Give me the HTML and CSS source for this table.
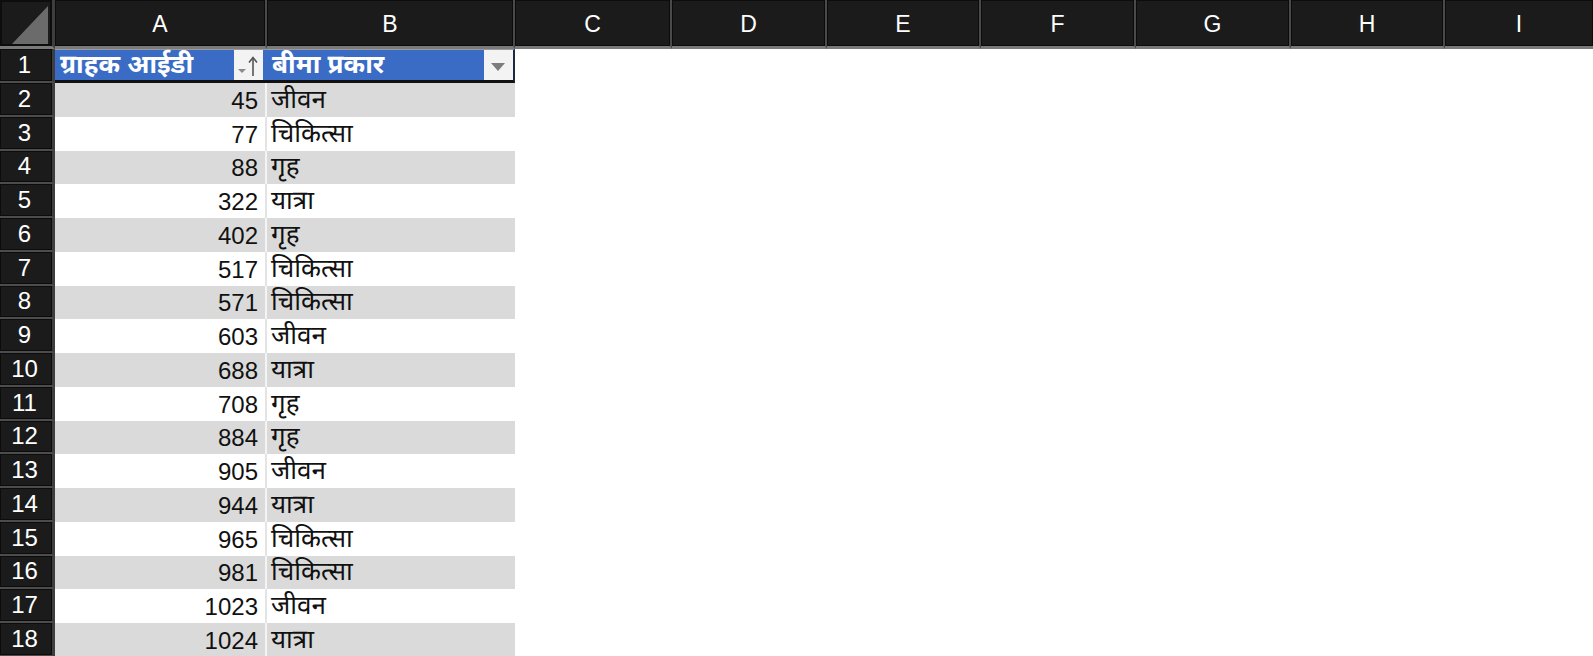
FILE: index.html
```html
<!DOCTYPE html>
<html lang="hi">
<head>
    <meta charset="UTF-8">
    <title>बीमा तालिका</title>
    <link rel="stylesheet" href="styles.css">
</head>
<body>
<div class="sheet">
    <!-- column headers -->
    <div class="corner"><svg width="52" height="48" viewBox="0 0 52 48"><polygon points="12,44 48,6 48,44" fill="#6b6b6b"/></svg></div>
    <div class="ch">A</div>
    <div class="ch">B</div>
    <div class="ch">C</div>
    <div class="ch">D</div>
    <div class="ch">E</div>
    <div class="ch">F</div>
    <div class="ch">G</div>
    <div class="ch">H</div>
    <div class="ch last">I</div>

    <!-- row 1: table header -->
    <div class="rh">1</div>
    <div class="th">
        <span>ग्राहक आईडी</span>
        <span class="filter">
            <svg width="28" height="30" viewBox="0 0 28 30">
                <polygon points="4,19 12,19 8,23" fill="#8a8a8a"/>
                <line x1="19" y1="8" x2="19" y2="26" stroke="#555" stroke-width="1.6"/>
                <polyline points="15,12.5 19,7.5 23,12.5" fill="none" stroke="#555" stroke-width="1.6"/>
            </svg>
        </span>
    </div>
    <div class="th th-b">
        <span>बीमा प्रकार</span>
        <span class="filter">
            <svg width="28" height="30" viewBox="0 0 28 30">
                <polygon points="7,13 21,13 14,21" fill="#7c7c7c"/>
            </svg>
        </span>
    </div>
    <div class="blank"></div>

    <div class="rh">2</div><div class="num band">45</div><div class="txt band">जीवन</div><div class="blank"></div>
    <div class="rh">3</div><div class="num">77</div><div class="txt">चिकित्सा</div><div class="blank"></div>
    <div class="rh">4</div><div class="num band">88</div><div class="txt band">गृह</div><div class="blank"></div>
    <div class="rh">5</div><div class="num">322</div><div class="txt">यात्रा</div><div class="blank"></div>
    <div class="rh">6</div><div class="num band">402</div><div class="txt band">गृह</div><div class="blank"></div>
    <div class="rh">7</div><div class="num">517</div><div class="txt">चिकित्सा</div><div class="blank"></div>
    <div class="rh">8</div><div class="num band">571</div><div class="txt band">चिकित्सा</div><div class="blank"></div>
    <div class="rh">9</div><div class="num">603</div><div class="txt">जीवन</div><div class="blank"></div>
    <div class="rh">10</div><div class="num band">688</div><div class="txt band">यात्रा</div><div class="blank"></div>
    <div class="rh">11</div><div class="num">708</div><div class="txt">गृह</div><div class="blank"></div>
    <div class="rh">12</div><div class="num band">884</div><div class="txt band">गृह</div><div class="blank"></div>
    <div class="rh">13</div><div class="num">905</div><div class="txt">जीवन</div><div class="blank"></div>
    <div class="rh">14</div><div class="num band">944</div><div class="txt band">यात्रा</div><div class="blank"></div>
    <div class="rh">15</div><div class="num">965</div><div class="txt">चिकित्सा</div><div class="blank"></div>
    <div class="rh">16</div><div class="num band">981</div><div class="txt band">चिकित्सा</div><div class="blank"></div>
    <div class="rh">17</div><div class="num">1023</div><div class="txt">जीवन</div><div class="blank"></div>
    <div class="rh">18</div><div class="num band">1024</div><div class="txt band">यात्रा</div><div class="blank"></div>
</div>
</body>
</html>
```

FILE: styles.css
```css
body {
    margin: 0;
    background: #fff;
    font-family: "Liberation Sans", "Noto Sans Devanagari", "Lohit Devanagari", "FreeSans", sans-serif;
    overflow: hidden;
}
.sheet {
    display: grid;
    grid-template-columns: 55px 212px 248px 157px 155px 154px 155px 155px 154px 1fr;
    grid-template-rows: 49px 34px repeat(17, 33.75px);
    width: 1593px;
}
.corner {
    background: #1b1b1b;
    border-right: 3px solid #3e3e3e;
    border-bottom: 3px solid #7a7a7a;
    box-sizing: border-box;
    box-shadow: inset 0 0 0 2px #0d0d0d;
}
.corner svg {
    display: block;
}
.ch {
    background: #1b1b1b;
    color: #fff;
    font-size: 23px;
    display: flex;
    align-items: center;
    justify-content: center;
    padding-top: 2px;
    border-right: 2px solid #4a4a4a;
    border-bottom: 3px solid #7a7a7a;
    box-shadow: inset 0 0 0 1px #0c0c0c;
    box-sizing: border-box;
}
.ch.last {
    border-right: none;
}
.rh {
    background: #1b1b1b;
    color: #fff;
    font-size: 24px;
    display: flex;
    align-items: center;
    justify-content: center;
    padding-right: 3px;
    border-right: 3px solid #3e3e3e;
    border-bottom: 2px solid #4c4c4c;
    box-shadow: inset 0 0 0 1px #0c0c0c;
    box-sizing: border-box;
}
.th {
    background: #3a6cc6;
    color: #fff;
    font-weight: bold;
    font-size: 26px;
    display: flex;
    align-items: center;
    justify-content: space-between;
    padding-left: 5px;
    border-bottom: 3px solid #111;
    border-top: 1px solid #9a9a9a;
    box-sizing: border-box;
}
.th span:first-child {
    padding-top: 3px;
}
.th-b {
    border-right: 2px solid #1a2a44;
}
.filter {
    width: 29px;
    height: 30px;
    background: #f3f3f3;
    margin-right: 4px;
    flex: none;
}
.th-b .filter {
    margin-right: 0;
}
.filter svg {
    display: block;
}
.num, .txt {
    background: #fff;
    color: #111;
    display: flex;
    align-items: center;
    box-sizing: border-box;
}
.num {
    font-size: 24px;
    justify-content: flex-end;
    padding-right: 7px;
    padding-top: 2px;
    border-right: 2px solid #e4e4e4;
}
.num.band {
    border-right-color: #f4f4f4;
}
.txt {
    font-size: 26px;
    padding-left: 4px;
    padding-top: 3px;
}
.band {
    background: #dadada;
}
.blank {
    grid-column: 4 / 11;
    background: #fff;
}
```
